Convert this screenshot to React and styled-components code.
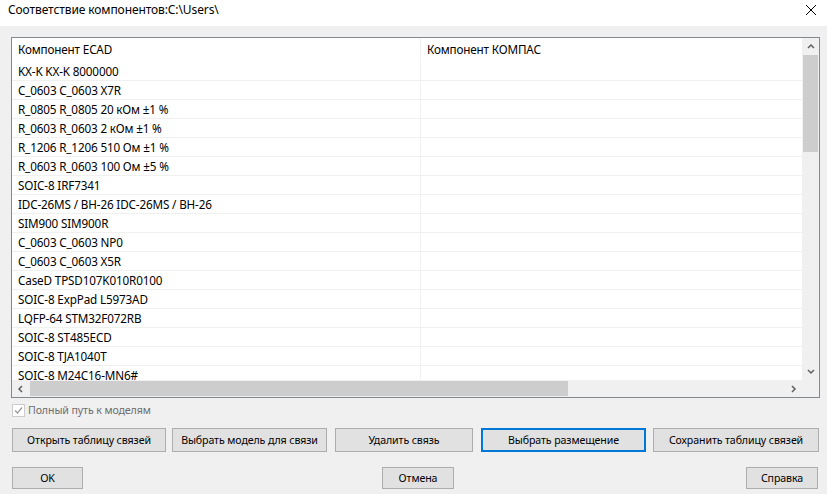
import styled, { createGlobalStyle } from 'styled-components'

const Global = createGlobalStyle`
  html, body { margin: 0; padding: 0; }
  body {
    width: 827px;
    height: 494px;
    overflow: hidden;
    background: #f0f0f0;
    font-family: "Noto Sans", "Open Sans", sans-serif;
    font-size: 12px;
    color: #000;
  }
`;

const Window = styled.div`
  width: 827px;
  height: 494px;
  display: flex;
  flex-direction: column;
  background: #f0f0f0;
`;

const TitleBar = styled.div`
  height: 26px;
  background: #fff;
  display: flex;
  align-items: flex-start;
  justify-content: space-between;
  padding: 2px 8px 0 8px;
  box-sizing: border-box;
  font-size: 12px;
  line-height: 16px;
  letter-spacing: -0.1px;
`;

const CloseBtn = styled.div`
  width: 12px;
  height: 12px;
  margin-top: 2px;
  margin-right: 2px;
`;

const Body = styled.div`
  flex: 1;
  display: flex;
  flex-direction: column;
  padding: 11px 7px 0 11px;
`;

const ListBox = styled.div`
  height: 361px;
  box-sizing: border-box;
  border: 1px solid #828790;
  background: #fff;
  display: grid;
  grid-template-columns: 1fr 17px;
  grid-template-rows: 1fr 17px;
`;

const View = styled.div`
  overflow: hidden;
`;

const Row = styled.div`
  display: grid;
  grid-template-columns: 409px 400px;
  height: ${p => (p.$head ? 24 : 19)}px;
  box-sizing: border-box;
  border-bottom: 1px solid ${p => (p.$head ? '#fff' : '#f0f0f0')};
  line-height: ${p => (p.$head ? 23 : 18)}px;
`;

const Cell = styled.div`
  padding-left: 6px;
  white-space: nowrap;
  overflow: hidden;
  border-right: 1px solid #f0f0f0;
  color: #000;
  font-size: 11.7px;
  letter-spacing: -0.15px;
`;

const VScroll = styled.div`
  background: #f0f0f0;
  display: flex;
  flex-direction: column;
  align-items: center;
`;

const HScroll = styled.div`
  background: #f0f0f0;
  display: flex;
  align-items: center;
`;

const Arrow = styled.div`
  width: 17px;
  height: 17px;
  flex: none;
  display: flex;
  align-items: center;
  justify-content: center;
`;

const VThumb = styled.div`
  width: 15px;
  height: 97px;
  background: #cdcdcd;
`;

const Spacer = styled.div`
  flex: 1;
`;

const HTrack = styled.div`
  flex: 1;
  height: 17px;
  display: flex;
  align-items: center;
`;

const HThumb = styled.div`
  height: 15px;
  width: 538px;
  margin-left: 1px;
  background: #cdcdcd;
`;

const Corner = styled.div`
  background: #f0f0f0;
`;

const CheckRow = styled.div`
  height: 22px;
  display: flex;
  align-items: center;
  gap: 3px;
  padding-left: 1px;
  color: #6d6d6d;
  margin-top: 1px;
  font-size: 10.6px;
  letter-spacing: -0.1px;
`;

const CheckBox = styled.div`
  width: 11px;
  height: 11px;
  border: 1px solid #cccccc;
  background: #fff;
  display: flex;
  align-items: center;
  justify-content: center;
`;

const ButtonRow = styled.div`
  display: flex;
  margin-top: 7px;
  margin-left: 1px;
`;

const Button = styled.div`
  width: ${p => p.$w}px;
  margin-left: ${p => p.$ml || 0}px;
  height: ${p => p.$h || 24}px;
  box-sizing: border-box;
  background: #e1e1e1;
  border: ${p => (p.$focus ? '2px solid #0078d7' : '1px solid #adadad')};
  display: flex;
  align-items: center;
  justify-content: center;
  white-space: nowrap;
  line-height: 14px;
  padding-bottom: 1px;
  font-size: 10.6px;
  letter-spacing: -0.1px;
`;

const BottomRow = styled.div`
  display: flex;
  margin-top: 15px;
  margin-left: 1px;
`;

const rows = [
  'KX-K KX-K 8000000',
  'C_0603 C_0603 X7R',
  'R_0805 R_0805 20 кОм ±1 %',
  'R_0603 R_0603 2 кОм ±1 %',
  'R_1206 R_1206 510 Ом ±1 %',
  'R_0603 R_0603 100 Ом ±5 %',
  'SOIC-8 IRF7341',
  'IDC-26MS / BH-26 IDC-26MS / BH-26',
  'SIM900 SIM900R',
  'C_0603 C_0603 NP0',
  'C_0603 C_0603 X5R',
  'CaseD TPSD107K010R0100',
  'SOIC-8 ExpPad L5973AD',
  'LQFP-64 STM32F072RB',
  'SOIC-8 ST485ECD',
  'SOIC-8 TJA1040T',
  'SOIC-8 M24C16-MN6#',
];

const Chevron = ({ dir }) => {
  const d = {
    up: 'M1 5 L4 2 L7 5',
    down: 'M1 2 L4 5 L7 2',
    left: 'M5 1 L2 4 L5 7',
    right: 'M2 1 L5 4 L2 7',
  }[dir];
  return (
    <svg width="8" height="8" viewBox="0 0 8 8">
      <path d={d} fill="none" stroke="#606060" strokeWidth="1.5" />
    </svg>
  );
};

export default function App() {
  return (
    <Window>
      <Global />
      <TitleBar>
        <span>Соответствие компонентов:C:\Users\</span>
        <CloseBtn>
          <svg width="12" height="12" viewBox="0 0 12 12">
            <path d="M1 1 L11 11 M11 1 L1 11" stroke="#000" strokeWidth="1" />
          </svg>
        </CloseBtn>
      </TitleBar>
      <Body>
        <ListBox>
          <View>
            <Row $head>
              <Cell>Компонент ECAD</Cell>
              <Cell>Компонент КОМПАС</Cell>
            </Row>
            {rows.map((r, i) => (
              <Row key={i}>
                <Cell>{r}</Cell>
                <Cell></Cell>
              </Row>
            ))}
          </View>
          <VScroll>
            <Arrow><Chevron dir="up" /></Arrow>
            <VThumb />
            <Spacer />
            <Arrow><Chevron dir="down" /></Arrow>
          </VScroll>
          <HScroll>
            <Arrow><Chevron dir="left" /></Arrow>
            <HTrack><HThumb /></HTrack>
            <Arrow><Chevron dir="right" /></Arrow>
          </HScroll>
          <Corner />
        </ListBox>
        <CheckRow>
          <CheckBox>
            <svg width="9" height="9" viewBox="0 0 9 9">
              <path d="M1 4.5 L3.5 7 L8 1.5" fill="none" stroke="#9c9c9c" strokeWidth="1.3" />
            </svg>
          </CheckBox>
          <span>Полный путь к моделям</span>
        </CheckRow>
        <ButtonRow>
          <Button $w={154}>Открыть таблицу связей</Button>
          <Button $w={155} $ml={6}>Выбрать модель для связи</Button>
          <Button $w={138} $ml={8}>Удалить связь</Button>
          <Button $w={165} $ml={8} $focus>Выбрать размещение</Button>
          <Button $w={166} $ml={7}>Сохранить таблицу связей</Button>
        </ButtonRow>
        <BottomRow>
          <Button $w={71} $h={22}>OK</Button>
          <Button $w={72} $h={22} $ml={299}>Отмена</Button>
          <Button $w={72} $h={22} $ml={292}>Справка</Button>
        </BottomRow>
      </Body>
    </Window>
  );
}
